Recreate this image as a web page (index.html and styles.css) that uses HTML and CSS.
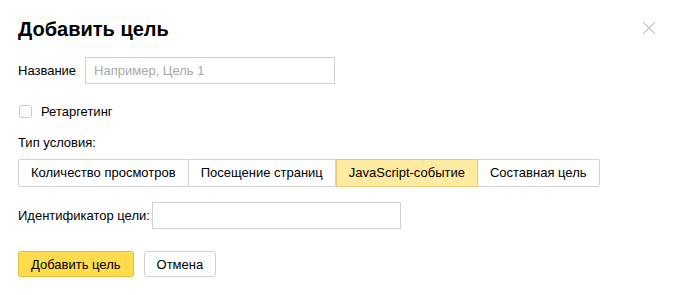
FILE: index.html
```html
<!DOCTYPE html>
<html lang="ru">
<head>
    <meta charset="UTF-8">
    <title>Добавить цель</title>
    <link rel="stylesheet" href="styles.css">
</head>
<body>
    <div class="dialog">
        <div class="dialog-head">
            <h1 class="dialog-title">Добавить цель</h1>
            <button class="close-btn" aria-label="Закрыть">
                <svg width="14" height="14" viewBox="0 0 14 14"><path d="M1 1L13 13M13 1L1 13" stroke="#c8c8c8" stroke-width="1.3" fill="none"/></svg>
            </button>
        </div>
        <div class="field-row name-row">
            <label for="goal-name">Название</label>
            <input id="goal-name" class="text-input name-input" type="text" placeholder="Например, Цель 1">
        </div>
        <label class="check-row">
            <span class="checkbox"></span>
            Ретаргетинг
        </label>
        <div class="section-label">Тип условия:</div>
        <div class="radio-group">
            <span class="radio-btn">Количество просмотров</span>
            <span class="radio-btn">Посещение страниц</span>
            <span class="radio-btn active">JavaScript-событие</span>
            <span class="radio-btn">Составная цель</span>
        </div>
        <div class="field-row id-row">
            <label for="goal-id">Идентификатор цели:</label>
            <input id="goal-id" class="text-input id-input" type="text">
        </div>
        <div class="actions">
            <button class="btn btn-primary">Добавить цель</button>
            <button class="btn">Отмена</button>
        </div>
    </div>
</body>
</html>
```

FILE: styles.css
```css
* {
    padding: 0;
    margin: 0;
    box-sizing: border-box;
    font-family: "Liberation Sans", Arial, sans-serif;
}
body {
    background: #fff;
    color: #000;
    font-size: 13px;
}
.dialog {
    padding: 17px 19px 0 18px;
}
.dialog-head {
    display: flex;
    justify-content: space-between;
    align-items: flex-start;
}
.dialog-title {
    font-size: 20px;
    line-height: 24px;
    font-weight: bold;
}
.close-btn {
    background: none;
    border: none;
    width: 14px;
    height: 14px;
    margin-top: 4px;
    display: flex;
    cursor: pointer;
}
.field-row {
    display: flex;
    align-items: center;
}
.field-row label {
    margin-right: 9px;
}
.name-row {
    margin-top: 16px;
}
.id-row {
    margin-top: 15px;
}
.id-row label {
    margin-right: 2px;
}
.text-input {
    height: 27px;
    border: 1px solid #d0d0d0;
    font-size: 13px;
    padding: 0 8px;
    outline: none;
}
.text-input::placeholder {
    color: #a8a8a8;
}
.name-input {
    width: 250px;
}
.id-input {
    width: 249px;
}
.check-row {
    display: flex;
    align-items: center;
    margin-top: 21px;
    height: 13px;
    line-height: 13px;
}
.checkbox {
    width: 13px;
    height: 13px;
    border: 1px solid #c8c8c8;
    border-radius: 3px;
    margin: 0 9px 0 1px;
}
.section-label {
    margin-top: 17px;
    line-height: 16px;
}
.radio-group {
    display: flex;
    margin-top: 8px;
}
.radio-btn {
    height: 28px;
    line-height: 26px;
    padding: 0 12px;
    border: 1px solid #d3d3d3;
    border-left: none;
    white-space: nowrap;
}
.radio-btn:first-child {
    border-left: 1px solid #d3d3d3;
    border-radius: 2px 0 0 2px;
}
.radio-btn:last-child {
    border-radius: 0 2px 2px 0;
}
.radio-btn.active {
    background: #ffeba0;
    border-color: #e8cc7a;
    border-left: 1px solid #e8cc7a;
}
.actions {
    display: flex;
    gap: 10px;
    margin-top: 22px;
}
.btn {
    height: 26px;
    padding: 0 12px;
    font-size: 13px;
    background: #fff;
    border: 1px solid #d0d0d0;
    border-radius: 3px;
    cursor: pointer;
}
.btn-primary {
    background: #ffdb4d;
    border-color: #e5bf2e;
    padding: 0 12px;
}
```
